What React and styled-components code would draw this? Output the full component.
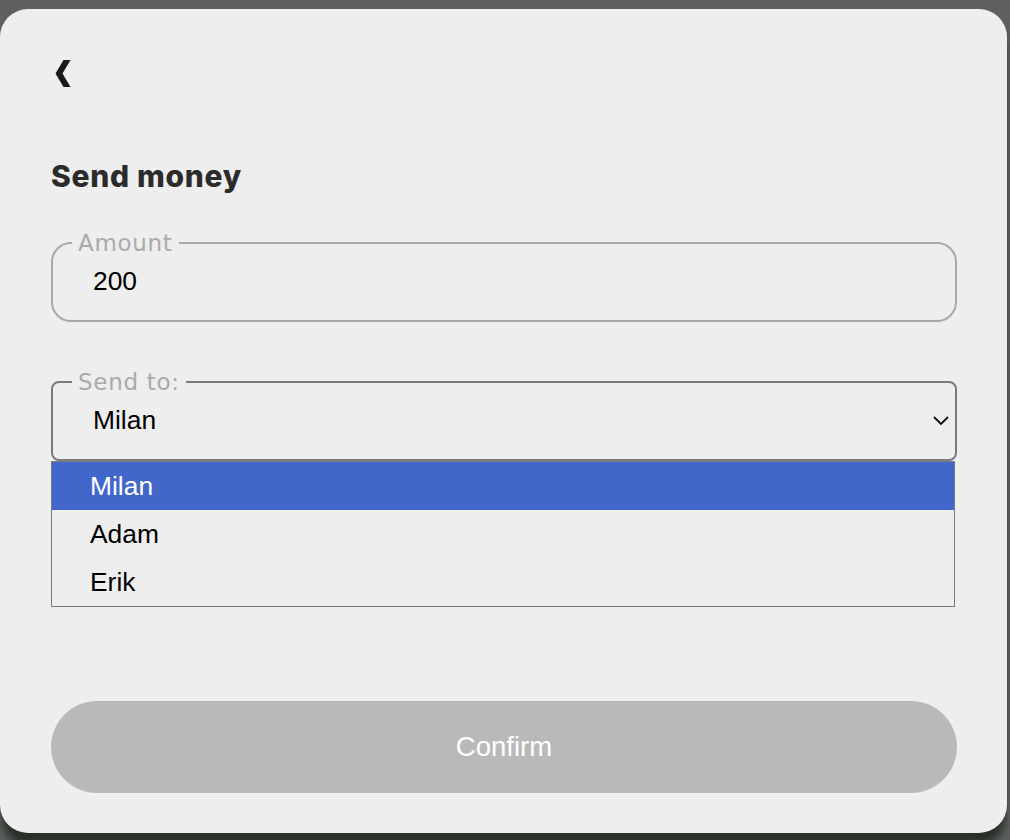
import React from "react";
import styled, { createGlobalStyle } from "styled-components";

const GlobalStyle = createGlobalStyle`
  html, body {
    margin: 0;
    padding: 0;
    background: #5f5f5f;
    height: 840px;
    overflow: hidden;
  }
  body {
    font-family: "Liberation Sans", Arial, sans-serif;
  }
`;

const recipients = ["Milan", "Adam", "Erik"];

const App = () => {
  return (
    <>
      <GlobalStyle />
      <StPage>
        <StCard>
          <StBack aria-label="back">
            <svg width="16" height="27" viewBox="0 0 16 27">
              <polygon
                points="8.5,0 15.5,0 7.5,13.5 15.5,27 8.5,27 0.5,13.5"
                fill="#1a1a1a"
              />
            </svg>
          </StBack>
          <StTitle>Send money</StTitle>
          <StField $radius="20px" $border="#a9a9a9" $top="35px">
            <StLegend>Amount</StLegend>
            <StValue>200</StValue>
          </StField>
          <StField $radius="8px" $border="#7a7a7a" $top="48px">
            <StLegend>Send to:</StLegend>
            <StSelectRow>
              <StValue>Milan</StValue>
              <svg width="18" height="12" viewBox="0 0 18 12">
                <polyline
                  points="2,3 9,10 16,3"
                  fill="none"
                  stroke="#111"
                  strokeWidth="1.8"
                />
              </svg>
            </StSelectRow>
          </StField>
          <StOptions>
            {recipients.map((name, i) => (
              <StOption key={name} $active={i === 0}>
                {name}
              </StOption>
            ))}
          </StOptions>
          <StConfirm>Confirm</StConfirm>
        </StCard>
      </StPage>
    </>
  );
};

export default App;

const StPage = styled.div`
  padding-top: 9px;
`;

const StCard = styled.div`
  display: flex;
  flex-direction: column;
  box-sizing: border-box;
  width: 1007px;
  height: 824px;
  padding: 51px 50px 0 51px;
  background-color: #eeeeee;
  border-radius: 28px;
  box-shadow: 0 14px 8px -2px #283028;
`;

const StBack = styled.div`
  display: flex;
  height: 27px;
  padding-left: 4px;
`;

const StTitle = styled.h1`
  margin: 69px 0 0 0;
  font-family: "Inter", sans-serif;
  font-weight: 800;
  font-size: 30px;
  line-height: 40px;
  color: #2b2b2b;
  letter-spacing: 0.7px;
`;

const StField = styled.fieldset`
  margin: ${(p) => p.$top} 0 0 0;
  padding: 6px 0 19px 40px;
  min-width: 0;
  border: 2px solid ${(p) => p.$border};
  border-radius: ${(p) => p.$radius};
`;

const StLegend = styled.legend`
  margin-left: -21px;
  padding: 0 6px;
  font-family: "DejaVu Sans", sans-serif;
  font-weight: 400;
  font-size: 23px;
  line-height: 24px;
  letter-spacing: 0.7px;
  color: #aaaaaa;
`;

const StValue = styled.div`
  font-size: 26.4px;
  line-height: 40px;
  color: #000;
`;

const StSelectRow = styled.div`
  display: flex;
  align-items: center;
  justify-content: space-between;
  padding-right: 5px;
`;

const StOptions = styled.div`
  display: flex;
  flex-direction: column;
  width: 902px;
  border: 1px solid #7a7a7a;
`;

const StOption = styled.div`
  height: 48px;
  line-height: 48px;
  padding-left: 38px;
  font-size: 26.4px;
  color: ${(p) => (p.$active ? "#ffffff" : "#000000")};
  background-color: ${(p) => (p.$active ? "#4267cb" : "transparent")};
`;

const StConfirm = styled.button`
  margin-top: 94px;
  width: 906px;
  height: 92px;
  border: none;
  border-radius: 46px;
  background-color: #b9b9b9;
  color: #ffffff;
  font-family: "Liberation Sans", Arial, sans-serif;
  font-size: 27.5px;
`;
